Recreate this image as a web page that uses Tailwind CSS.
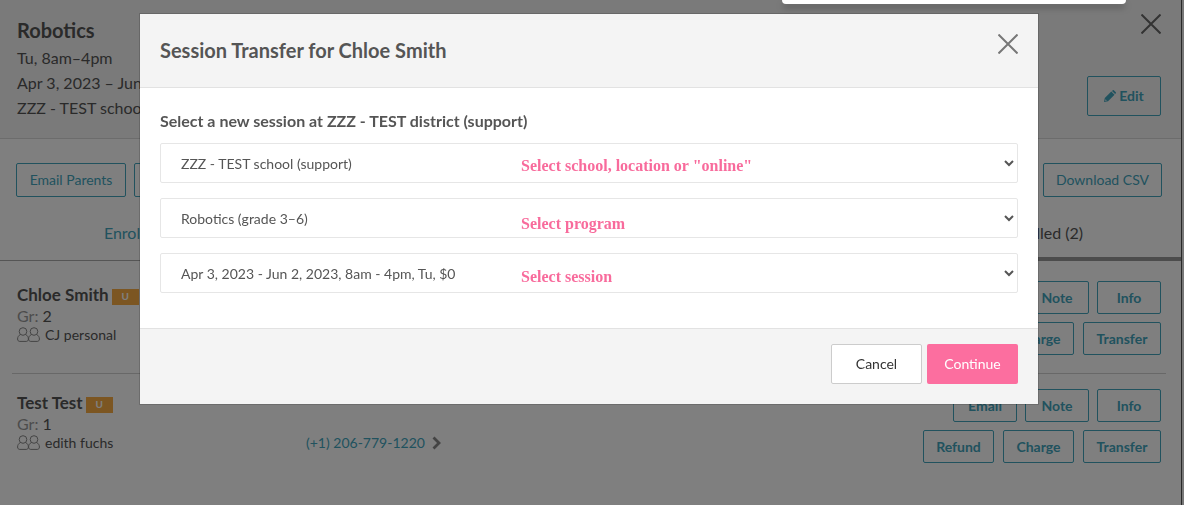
<!DOCTYPE html>
<html lang="en">
<head>
<meta charset="utf-8">
<title>Session Transfer</title>
<script src="https://cdn.jsdelivr.net/npm/@tailwindcss/browser@4"></script>
</head>
<body class="h-screen overflow-hidden bg-white font-['Lato',sans-serif] text-[#555]">
<svg class="hidden">
  <symbol id="people" viewBox="0 0 23 15"><g fill="none" stroke="currentColor" stroke-width="1"><circle cx="6" cy="4.5" r="3.8"/><circle cx="17" cy="4.5" r="3.8"/><path d="M3.5 7.5C1.5 8.5.6 10 .6 12c0 1.5.8 2.4 2.2 2.4h6.400c1.400 0 2.200-.9 2.200-2.400 0-2-.9-3.500-2.900-4.500M14.500 7.500c-2 1-2.900 2.500-2.900 4.500 0 1.500.8 2.400 2.200 2.400h6.400c1.400 0 2.200-.9 2.200-2.400 0-2-.9-3.500-2.900-4.500"/></g></symbol>
  <symbol id="cross" viewBox="0 0 20 20"><path d="M.5.5l19 19M19.500.5l-19 19" stroke="currentColor" stroke-width="2" fill="none"/></symbol>
</svg>
<div class="flex h-full">
  <main class="min-w-0 flex-1">
    <header class="flex h-[139px] justify-between border-b border-[#d8d8d8] bg-[#f4f4f4] pt-[14px] pr-5 pl-[17px]">
      <div>
        <h1 class="h-[31px] text-xl leading-8 font-bold">Robotics</h1>
        <p class="text-base leading-[25px]">Tu, 8am–4pm</p>
        <p class="text-base leading-[25px]">Apr 3, 2023 – Jun 2, 2023</p>
        <p class="text-base leading-[26px]">ZZZ - TEST school (support)</p>
      </div>
      <div class="flex flex-col items-end gap-[42px]">
        <button aria-label="Close session" class="h-5 w-5 text-[#666]"><svg class="h-5 w-5"><use href="#cross"/></svg></button>
        <button class="flex h-10 w-[74px] items-center justify-center gap-[3px] rounded-xs border border-[#42a5bd] text-sm font-bold text-[#42a5bd]"><svg class="h-3 w-3" viewBox="0 0 12 12" fill="currentColor"><path fill-rule="evenodd" d="M0 12l.8-4L7.300 1.500l3.200 3.200L4 11.200zM1.500 9.300l-.3 1.100.5.500 1.100-.3z"/><path d="M8 .9l.8-.7q.5-.4 1 0l2 2q.4.500 0 1l-.7.8z"/></svg>Edit</button>
      </div>
    </header>
    <div class="flex justify-between pt-6 pr-[19px] pl-4">
      <div class="flex gap-2">
        <button class="h-[34px] w-[110px] rounded-xs border border-[#42a5bd] text-sm text-[#42a5bd]">Email Parents</button>
        <button class="h-[34px] w-[110px] rounded-xs border border-[#42a5bd] text-sm text-[#42a5bd]">Text Parents</button>
      </div>
      <button class="h-[34px] w-[119px] rounded-xs border border-[#42a5bd] text-sm text-[#42a5bd]">Download CSV</button>
    </div>
    <nav class="mt-2 grid h-14 grid-cols-4 border-b border-[#aaa] text-center text-base leading-[56px]">
      <a href="#enrolled" class="pr-2 text-[#42a5bd]">Enrolled (2)</a>
      <a href="#unenrolled" class="col-start-4 h-14 border-b-4 border-[#999]">Unenrolled (2)</a>
    </nav>
    <ul class="pr-[15px] pl-3">
      <li class="flex border-b border-[#d0d0d0] px-[5px] pt-5 pb-[18px]">
        <div class="flex-1">
          <h2 class="flex h-[27px] items-center gap-[3px] text-[17px] font-bold">Chloe Smith <span class="mt-1 flex h-4 w-[27px] items-center justify-center bg-[#f9ad45] text-[10px] text-white">U</span></h2>
          <p class="h-4 text-base leading-4"><span class="text-[#999]">Gr:</span> 2</p>
          <p class="flex h-[21px] items-center gap-[5px] text-sm"><svg class="h-[15px] w-[23px] text-[#888]"><use href="#people"/></svg>CJ personal</p>
        </div>
        <div class="flex flex-col items-end gap-2 text-sm font-bold text-[#42a5bd]">
          <div class="flex gap-2">
            <button class="h-[33px] w-16 rounded-xs border border-[#42a5bd]">Email</button>
            <button class="h-[33px] w-16 rounded-xs border border-[#42a5bd]">Note</button>
            <button class="h-[33px] w-16 rounded-xs border border-[#42a5bd]">Info</button>
          </div>
          <div class="flex gap-[9px]">
            <button class="h-[33px] w-[71px] rounded-xs border border-[#42a5bd]">Refund</button>
            <button class="h-[33px] w-[71px] rounded-xs border border-[#42a5bd]">Charge</button>
            <button class="h-[33px] w-[78px] rounded-xs border border-[#42a5bd]">Transfer</button>
          </div>
        </div>
      </li>
      <li class="flex px-[5px] pt-[15px]">
        <div class="w-[289px]">
          <h2 class="flex h-[27px] items-center gap-[3px] text-[17px] font-bold">Test Test <span class="mt-1 flex h-4 w-[27px] items-center justify-center bg-[#f9ad45] text-[10px] text-white">U</span></h2>
          <p class="h-4 text-base leading-4"><span class="text-[#999]">Gr:</span> 1</p>
          <p class="flex h-[21px] items-center gap-[5px] text-sm"><svg class="h-[15px] w-[23px] text-[#888]"><use href="#people"/></svg>edith fuchs</p>
        </div>
        <div class="flex-1 pt-[43px]">
          <a href="tel:+12067791220" class="flex h-[21px] items-center gap-[7px] text-sm text-[#42a5bd]">(+1) 206-779-1220 <svg class="h-[14px] w-[9px] text-[#888]" viewBox="0 0 9 14"><path d="M1.500 1.500L7 7l-5.500 5.500" fill="none" stroke="currentColor" stroke-width="2.800"/></svg></a>
        </div>
        <div class="flex flex-col items-end gap-2 text-sm font-bold text-[#42a5bd]">
          <div class="flex gap-2">
            <button class="h-[33px] w-16 rounded-xs border border-[#42a5bd]">Email</button>
            <button class="h-[33px] w-16 rounded-xs border border-[#42a5bd]">Note</button>
            <button class="h-[33px] w-16 rounded-xs border border-[#42a5bd]">Info</button>
          </div>
          <div class="flex gap-[9px]">
            <button class="h-[33px] w-[71px] rounded-xs border border-[#42a5bd]">Refund</button>
            <button class="h-[33px] w-[71px] rounded-xs border border-[#42a5bd]">Charge</button>
            <button class="h-[33px] w-[78px] rounded-xs border border-[#42a5bd]">Transfer</button>
          </div>
        </div>
      </li>
    </ul>
  </main>
  <div class="w-[3px] border-l border-[#555] bg-[#eee]"></div>
</div>

<div class="fixed inset-0 bg-black/50 pt-[14px] pr-[146px] pl-[140px]">
  <section role="dialog" aria-labelledby="dialog-title" class="bg-white outline outline-black/15">
    <header class="flex h-[74px] items-start justify-between border-b border-[#e2e2e2] bg-[#f4f4f4] px-5">
      <h2 id="dialog-title" class="text-xl leading-[73px] font-bold">Session Transfer for Chloe Smith</h2>
      <button aria-label="Close" class="mt-5 h-5 w-5 text-[#777]"><svg class="h-5 w-5"><use href="#cross"/></svg></button>
    </header>
    <form class="px-5 pt-[21px] pb-[35px]">
      <h3 class="h-[34px] text-base leading-6 font-bold">Select a new session at ZZZ - TEST district (support)</h3>
      <div class="flex flex-col gap-[15px]">
        <div class="relative"><select id="school" aria-labelledby="school-hint" class="block h-10 w-full rounded-xs border border-[#e6e6e6] bg-white pl-4 text-sm"><option>ZZZ - TEST school (support)</option></select><label id="school-hint" for="school" class="pointer-events-none absolute top-[11px] left-[361px] font-['Liberation_Serif',serif] text-base font-bold text-[#f86b9c]">Select school, location or "online"</label></div>
        <div class="relative"><select id="program" aria-labelledby="program-hint" class="block h-10 w-full rounded-xs border border-[#e6e6e6] bg-white pl-4 text-sm"><option>Robotics (grade 3–6)</option></select><label id="program-hint" for="program" class="pointer-events-none absolute top-[14px] left-[361px] font-['Liberation_Serif',serif] text-base font-bold text-[#f86b9c]">Select program</label></div>
        <div class="relative"><select id="session" aria-labelledby="session-hint" class="block h-10 w-full rounded-xs border border-[#e6e6e6] bg-white pl-4 text-sm"><option>Apr 3, 2023 - Jun 2, 2023, 8am - 4pm, Tu, $0</option></select><label id="session-hint" for="session" class="pointer-events-none absolute top-3 left-[361px] font-['Liberation_Serif',serif] text-base font-bold text-[#f86b9c]">Select session</label></div>
      </div>
    </form>
    <footer class="flex justify-end gap-[5px] border-t border-[#e2e2e2] bg-[#f4f4f4] px-5 pt-[15px] pb-5 text-sm">
      <button class="h-10 w-[91px] rounded-xs border border-[#ccc] bg-white text-[#333]">Cancel</button>
      <button class="h-10 w-[91px] rounded-xs bg-[#fc6e9f] text-white">Continue</button>
    </footer>
  </section>
  <div class="absolute top-0 right-[58px] h-1 w-[344px] rounded-b bg-white shadow-md shadow-black/50"></div>
</div>
</body>
</html>
